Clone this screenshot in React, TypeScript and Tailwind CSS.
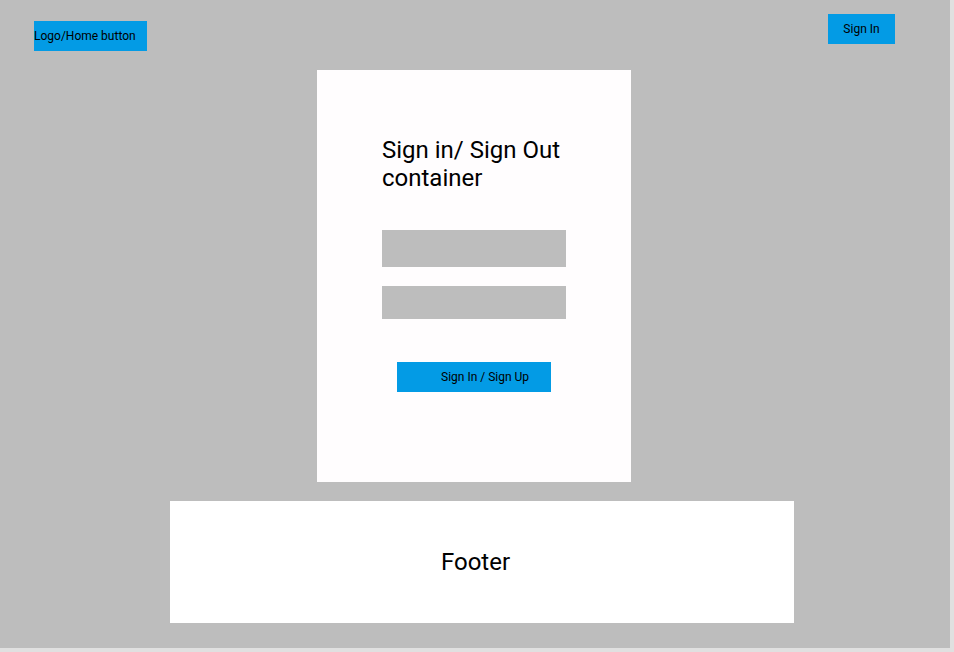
export default function App() {
  return (
    <div className="w-[954px] h-[652px] bg-[#e0e0e0] font-['Roboto',sans-serif] text-black">
      <div className="w-[950px] h-[648px] bg-[#bdbdbd] flex flex-col">
        {/* Header */}
        <header className="h-[70px] flex justify-between items-start pl-[34px] pr-[55px]">
          <button className="mt-[21px] w-[113px] h-[30px] bg-[#039be5] text-[12px] leading-[30px] text-left">
            Logo/Home button
          </button>
          <button className="mt-[14px] w-[67px] h-[30px] bg-[#039be5] text-[12px] leading-[30px] text-center">
            Sign In
          </button>
        </header>

        {/* Sign in card */}
        <div className="ml-[317px] w-[314px] h-[412px] bg-[#fffdfe] pl-[65px] pt-[66px] flex flex-col items-start">
          <h1 className="text-[24px] leading-[28px] w-[200px]">Sign in/ Sign Out container</h1>
          <input className="mt-[38px] w-[184px] h-[37px] bg-[#bdbdbd] outline-none" />
          <input className="mt-[19px] w-[184px] h-[33px] bg-[#bdbdbd] outline-none" type="password" />
          <button className="mt-[43px] ml-[15px] w-[154px] h-[30px] bg-[#039be5] text-[12px] leading-[30px] text-left pl-[44px]">
            Sign In / Sign Up
          </button>
        </div>

        {/* Footer */}
        <footer className="mt-[19px] ml-[170px] w-[624px] h-[122px] bg-white flex items-center justify-center pr-[13px]">
          <span className="text-[24px]">Footer</span>
        </footer>
      </div>
    </div>
  );
}
